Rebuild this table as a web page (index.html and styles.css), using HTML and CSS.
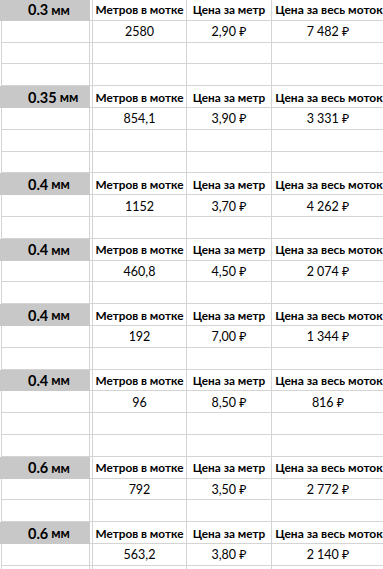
FILE: index.html
```html
<!DOCTYPE html>
<html lang="ru">
<head>
<meta charset="utf-8">
<title>Прайс</title>
<link rel="stylesheet" href="styles.css">
</head>
<body>
<div class="sheet">
  <div class="row head"><div class="c a"><span class="num">0.3</span> <span class="unit">мм</span></div><div class="c b"></div><div class="c">Метров в мотке</div><div class="c">Цена за метр</div><div class="c e">Цена за весь моток</div></div>
  <div class="row"><div class="c a"></div><div class="c b"></div><div class="c">2580</div><div class="c">2,90&nbsp;₽</div><div class="c e">7&nbsp;482&nbsp;₽</div></div>
  <div class="row"><div class="c a"></div><div class="c b"></div><div class="c"></div><div class="c"></div><div class="c e"></div></div>
  <div class="row"><div class="c a"></div><div class="c b"></div><div class="c"></div><div class="c"></div><div class="c e"></div></div>

  <div class="row head"><div class="c a"><span class="num">0.35</span> <span class="unit">мм</span></div><div class="c b"></div><div class="c">Метров в мотке</div><div class="c">Цена за метр</div><div class="c e">Цена за весь моток</div></div>
  <div class="row"><div class="c a"></div><div class="c b"></div><div class="c">854,1</div><div class="c">3,90&nbsp;₽</div><div class="c e">3&nbsp;331&nbsp;₽</div></div>
  <div class="row"><div class="c a"></div><div class="c b"></div><div class="c"></div><div class="c"></div><div class="c e"></div></div>
  <div class="row"><div class="c a"></div><div class="c b"></div><div class="c"></div><div class="c"></div><div class="c e"></div></div>

  <div class="row head"><div class="c a"><span class="num">0.4</span> <span class="unit">мм</span></div><div class="c b"></div><div class="c">Метров в мотке</div><div class="c">Цена за метр</div><div class="c e">Цена за весь моток</div></div>
  <div class="row"><div class="c a"></div><div class="c b"></div><div class="c">1152</div><div class="c">3,70&nbsp;₽</div><div class="c e">4&nbsp;262&nbsp;₽</div></div>
  <div class="row"><div class="c a"></div><div class="c b"></div><div class="c"></div><div class="c"></div><div class="c e"></div></div>

  <div class="row head"><div class="c a"><span class="num">0.4</span> <span class="unit">мм</span></div><div class="c b"></div><div class="c">Метров в мотке</div><div class="c">Цена за метр</div><div class="c e">Цена за весь моток</div></div>
  <div class="row"><div class="c a"></div><div class="c b"></div><div class="c">460,8</div><div class="c">4,50&nbsp;₽</div><div class="c e">2&nbsp;074&nbsp;₽</div></div>
  <div class="row"><div class="c a"></div><div class="c b"></div><div class="c"></div><div class="c"></div><div class="c e"></div></div>

  <div class="row head"><div class="c a"><span class="num">0.4</span> <span class="unit">мм</span></div><div class="c b"></div><div class="c">Метров в мотке</div><div class="c">Цена за метр</div><div class="c e">Цена за весь моток</div></div>
  <div class="row"><div class="c a"></div><div class="c b"></div><div class="c">192</div><div class="c">7,00&nbsp;₽</div><div class="c e">1&nbsp;344&nbsp;₽</div></div>
  <div class="row"><div class="c a"></div><div class="c b"></div><div class="c"></div><div class="c"></div><div class="c e"></div></div>

  <div class="row head"><div class="c a"><span class="num">0.4</span> <span class="unit">мм</span></div><div class="c b"></div><div class="c">Метров в мотке</div><div class="c">Цена за метр</div><div class="c e">Цена за весь моток</div></div>
  <div class="row"><div class="c a"></div><div class="c b"></div><div class="c">96</div><div class="c">8,50&nbsp;₽</div><div class="c e">816&nbsp;₽</div></div>
  <div class="row"><div class="c a"></div><div class="c b"></div><div class="c"></div><div class="c"></div><div class="c e"></div></div>
  <div class="row"><div class="c a"></div><div class="c b"></div><div class="c"></div><div class="c"></div><div class="c e"></div></div>

  <div class="row head"><div class="c a"><span class="num">0.6</span> <span class="unit">мм</span></div><div class="c b"></div><div class="c">Метров в мотке</div><div class="c">Цена за метр</div><div class="c e">Цена за весь моток</div></div>
  <div class="row"><div class="c a"></div><div class="c b"></div><div class="c">792</div><div class="c">3,50&nbsp;₽</div><div class="c e">2&nbsp;772&nbsp;₽</div></div>
  <div class="row"><div class="c a"></div><div class="c b"></div><div class="c"></div><div class="c"></div><div class="c e"></div></div>

  <div class="row head"><div class="c a"><span class="num">0.6</span> <span class="unit">мм</span></div><div class="c b"></div><div class="c">Метров в мотке</div><div class="c">Цена за метр</div><div class="c e">Цена за весь моток</div></div>
  <div class="row"><div class="c a"></div><div class="c b"></div><div class="c">563,2</div><div class="c">3,80&nbsp;₽</div><div class="c e">2&nbsp;140&nbsp;₽</div></div>
  <div class="row"><div class="c a"></div><div class="c b"></div><div class="c"></div><div class="c"></div><div class="c e"></div></div>
</div>
</body>
</html>
```

FILE: styles.css
```css
html, body {
  margin: 0;
  padding: 0;
  background: #ffffff;
  overflow: hidden;
}

.sheet {
  margin-top: -1px;
  width: 384px;
  font-family: Lato, "Noto Sans", "DejaVu Sans", sans-serif;
  font-size: 12.5px;
  color: #000;
}

.row {
  display: grid;
  grid-template-columns: 90px 3px 94px 85px 112px;
  height: 21.8px;
}

.c {
  box-sizing: border-box;
  border-right: 1px solid #d4d4d4;
  border-bottom: 1px solid #d4d4d4;
  display: flex;
  align-items: center;
  justify-content: center;
  white-space: nowrap;
  overflow: hidden;
  padding-top: 1px;
}

.c.a {
  border-left: 1px solid #d4d4d4;
  margin-left: 1px;
}

.c.e {
  border-right: none;
}

.head .c {
  font-weight: 700;
  font-size: 11.8px;
}

.head .c.e {
  font-size: 12px;
  padding-left: 2px;
}

.head .c.a {
  background: #c8c8c8;
  border-color: #c8c8c8;
  border-left: none;
  margin-left: 0;
  justify-content: flex-start;
  padding-left: 28px;
  font-size: 13px;
}

.num {
  font-size: 14.5px;
  font-weight: 700;
  margin-right: 3px;
}

.unit {
  font-size: 13px;
  font-weight: 700;
}
```
